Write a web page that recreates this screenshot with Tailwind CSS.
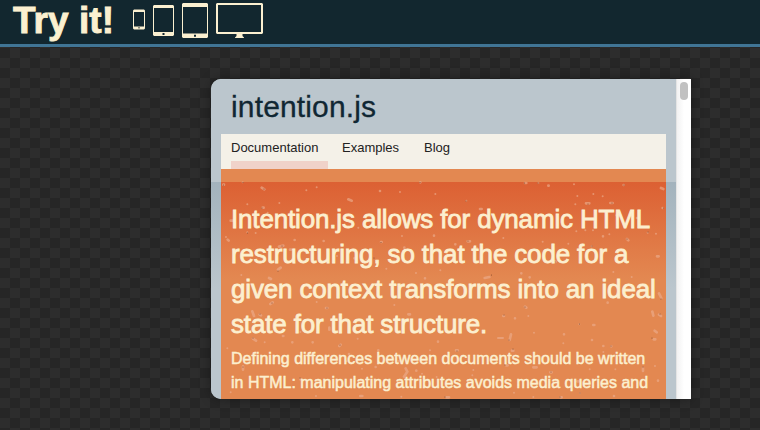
<!DOCTYPE html>
<html lang="en"><head><meta charset="utf-8"><title>intention.js</title>
<script src="https://cdn.jsdelivr.net/npm/@tailwindcss/browser@4"></script></head>
<body class="relative w-[760px] h-[430px] overflow-hidden bg-[#262626] bg-[conic-gradient(#2d2d2d_25%,#262626_0_50%,#2d2d2d_0_75%,#262626_0)] bg-size-[20px_20px] bg-position-[0_8px] font-['Liberation_Sans',Arial,sans-serif]">
<header class="flex h-[47px] border-b-3 border-[#407595] bg-[#12272f] pl-[13px]">
<h1 class="w-[120px] text-[37px] leading-[42px] font-bold tracking-[0.05px] text-[#fbf0d0] whitespace-nowrap [-webkit-text-stroke:0.9px_#fbf0d0]">Try it!</h1>
<svg class="h-[44px] w-[132px]" viewBox="133 0 132 44" fill="#fbf0d0">
<path fill-rule="evenodd" d="M134 9.500h10l1 1v18l-1 1h-10l-1-1v-18zM134 12v14.500h10V12z"/><path fill="#8b8b79" d="M138 27h2v1.500h-2z"/>
<path fill-rule="evenodd" d="M154 5h19l1 1v29l-1 1h-19l-1-1V6zM154 8v24h19V8z"/><path fill="#12272f" d="M162.500 33h2v2h-2z"/>
<path fill-rule="evenodd" d="M183 3h24l1 1v33l-1 1h-24l-1-1V4zM183 7v26.500h24V7z"/><path fill="#12272f" d="M194 34.700h2v2h-2z"/>
<path fill-rule="evenodd" d="M217 3h45l1 1v29l-1 1h-19.500v2l1.500 1.500v.5h-9v-.5l1.500-1.500v-2H217l-1-1V4zM218 5v27h43V5z"/>
</svg></header>
<main class="ml-[211px] mt-[32px] flex h-[320px] w-[480px] overflow-hidden rounded-l-[10px] bg-[#bbc6cd] shadow-[0_0_12px_rgba(0,0,0,.35)]">
<div class="w-[465px] px-[10px] bg-[linear-gradient(#bbc6cd_103px,#a3b3bd_103px,#bbc6cd_210px)]">
<h2 class="h-[55px] pl-[10px] pt-[9px] text-[30px] leading-[38px] tracking-[0.15px] text-[#102733] [-webkit-text-stroke:0.3px_#102733]">intention.js</h2>
<nav class="flex h-[35px] gap-[14px] bg-[#f4f1e8] pl-[10px] text-[13px] leading-[27px] text-[#222]">
<a class="h-[35px] w-[97px] border-b-8 border-[#f0d2c9]">Documentation</a><a class="w-[68px]">Examples</a><a>Blog</a></nav>
<section class="relative h-[230px] overflow-hidden bg-[linear-gradient(#e38851_13px,#dc6033_13px,#e38851_110px)] px-[10px] pt-[33px] text-[#fcefcf]">
<svg class="absolute left-0 top-0 h-[230px] w-[445px]" viewBox="221 169 445 230" fill="none" stroke-linecap="round">
<g stroke="#ecab8b" stroke-opacity=".66">
<g transform="translate(210 180) scale(.33333)">
<path stroke-width="8" d="M40 14h2M155 23l8 5M415 58l10 4M510 33h0M62 122h8M158 83h3M53 179l3 3M207 200l13-3M240 209h3M341 183h0M254 180h0M513 186h2M549 142h0M672 167h0M204 269l8-6M177 294l6 3M583 203h0M433 235h0M645 295h0M631 7h0"/>
<path stroke-width="6" d="M98 7h0M320 22h0M289 31h0M570 36h0M676 42h0M112 73h0M208 69h0M173 98h0M137 159h0M112 157h0M576 168h0M445 143h0M529 266h0M618 279h0M94 285h0M48 171h0M381 228h0M691 271h0M352 105h0"/></g>
<g transform="translate(440 180) scale(.33333)">
<path stroke-width="8" d="M255 9h4M325 17h1M551 15h0M663 24l7 3M438 70h10M511 69h7M120 87h5M668 84h0M530 106h6M489 169h0M561 177l4 4M651 229h5M83 184h7M134 294l14-3M244 280h0M46 193h0M342 245h5M591 114h0M269 292h0"/>
<path stroke-width="6" d="M295 9h0M402 13h0M412 48h0M460 42h0M488 49h0M406 73h0M79 62h0M409 154h0M459 151h0M436 151h0M508 163h0M623 158h0M648 161h0M190 174h0M308 185h0M385 191h0M455 199h0M111 204h0M575 291h0M520 276h0"/></g>
<g transform="translate(200 280) scale(.33333)">
<path stroke-width="8" d="M211 72l7-5M157 94l5 14M179 104l4 2M159 176l9 6M249 168h1M338 187h0M277 187h0M422 194l-4 4M378 84h4M388 143v6M447 222h0M535 211h0M129 259v10M617 265l5 10-10 15M527 261h0M649 272h0M301 298h2M481 348h6M625 103h5M714 185h0M596 244h0"/>
<path stroke-width="6" d="M350 66h0M583 75h0M301 156h0M194 187h0M120 222h0M82 205h0M440 244h0M348 348h0M604 350h0M666 281h0M710 291h0M92 337h0M486 266h0M473 176h0M690 211h0"/></g>
<g transform="translate(440 280) scale(.33333)">
<path stroke-width="8" d="M657 40l7 14M503 68h0M255 80l4 3M190 108h2M225 115h0M637 95l3 12M657 104l6 4M460 135h3M372 163h0M209 180l4-17M644 152l6 5M641 178h5M456 180h0M490 198h0M514 199h0M48 211h5M216 212h4M280 262h10M331 277h4M654 302h0M609 264v9M19 352h8M362 352h3M198 256h5M522 348h0M412 304h4"/>
<path stroke-width="6" d="M174 174h15M265 108h0M282 158h0M370 190h0M418 133h0M100 270h0M97 286h0M526 268h0M645 258h0M449 268h0M280 351h0M222 338h0M420 340h0M490 216h0M564 226h0M550 230h0M380 230h0M235 315h0"/></g></g>
<path stroke="#80472a" stroke-opacity=".9" stroke-width="1.2" d="M223.500 185h0M243 182.500h0M264 189h0M262 208h0M247.500 233h0M282 246h0M278 271h0M381 242.500h0M374 258h0M420 182.500h0M524.500 183h0M538 183h0M624 185h0M588 204h0M612 203h0M663.500 208h0M648 232h0M466 201h0M468 241h0M491.500 275h0M555 262h0M592 246h0M627 239h0M272 303h0M260 314h0M253 338h0M340 345h0M327 308h0M300 378h0M243 367h0M525 307h0M504 315h0M579.500 324h0M661 299h0M660 314h0M652 338h0M611 346h0M509 340h0M513 349h0M505 365h0M551 372h0M643 367h0M445 397h0M560 397h0M580 393h0M457 351h0"/>
</svg>
<p class="relative whitespace-nowrap text-[26px] leading-[35px] tracking-[-0.16px] [-webkit-text-stroke:0.8px_#fcefcf]">Intention.js allows for dynamic HTML<br>restructuring, so that the code for a<br>given context transforms into an ideal<br>state for that structure.</p>
<p class="relative whitespace-nowrap pt-[5px] text-[16px] leading-[24px] tracking-[0] [-webkit-text-stroke:0.5px_#fcefcf]">Defining differences between documents should be written<br>in HTML: manipulating attributes avoids media queries and</p>
</section></div>
<div class="flex w-[15px] justify-center border-l border-[#e4e4e4] bg-[linear-gradient(90deg,#f2f2f2,#fff_50%)] pt-[3px]"><div class="h-[18px] w-[8px] rounded-full bg-[#c1c1c1]"></div></div>
</main></body></html>
